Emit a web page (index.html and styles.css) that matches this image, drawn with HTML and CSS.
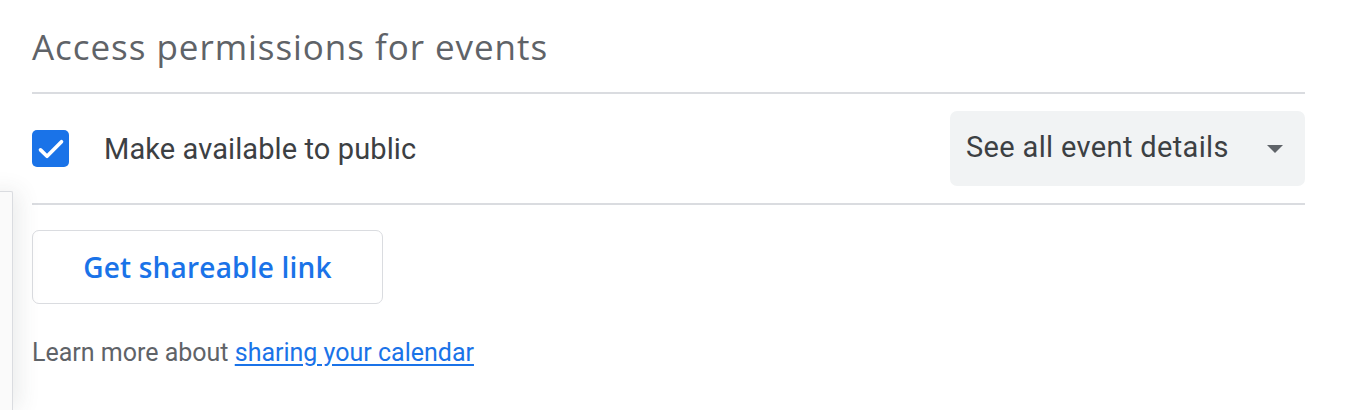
FILE: index.html
```html
<!DOCTYPE html>
<html>
<head>
<meta charset="utf-8">
<link rel="stylesheet" href="styles.css">
</head>
<body>
<div class="side-panel"></div>
<main class="section">
  <h2 class="title">Access permissions for events</h2>
  <div class="divider"></div>
  <div class="perm-row">
    <label class="check">
      <span class="box">
        <svg viewBox="0 0 24 24" width="34" height="34"><path d="M4.6 12.6l4.6 4.5 10.2-10.2" fill="none" stroke="#fff" stroke-width="2.6" stroke-linecap="round" stroke-linejoin="round"/></svg>
      </span>
      <span class="check-label">Make available to public</span>
    </label>
    <div class="select">
      <span class="select-text">See all event details</span>
      <span class="caret"></span>
    </div>
  </div>
  <div class="divider"></div>
  <button class="link-btn">Get shareable link</button>
  <p class="learn">Learn more about <a href="#">sharing your calendar</a></p>
</main>
</body>
</html>
```

FILE: styles.css
```css
html, body {
  margin: 0;
  padding: 0;
  background: #ffffff;
}
body {
  width: 1366px;
  height: 410px;
  overflow: hidden;
  position: relative;
  font-family: Roboto, "Liberation Sans", sans-serif;
}
.side-panel {
  position: absolute;
  left: -20px;
  top: 191px;
  width: 33px;
  height: 219px;
  box-sizing: border-box;
  background: #fafafa;
  border: 1px solid #dadce0;
  border-bottom: none;
  border-radius: 2px 2px 0 0;
  box-shadow: 6px 0 22px rgba(60, 64, 67, 0.10);
}
.section {
  width: 1273px;
  padding: 0 0 0 32px;
  display: flex;
  flex-direction: column;
}
.title {
  margin: 0;
  padding-top: 24px;
  height: 68px;
  box-sizing: border-box;
  font-family: "Open Sans", sans-serif;
  font-weight: 400;
  font-size: 35px;
  line-height: 46px;
  color: #5f6368;
  letter-spacing: 0.95px;
}
.divider {
  height: 2px;
  background: #dadce0;
  margin-top: 24px;
}
.perm-row {
  display: flex;
  align-items: center;
  justify-content: space-between;
  height: 109px;
}
.check {
  display: flex;
  align-items: center;
  gap: 35px;
}
.box {
  width: 37px;
  height: 37px;
  border-radius: 5px;
  background: #1a73e8;
  display: flex;
  align-items: center;
  justify-content: center;
}
.check-label {
  font-size: 29px;
  color: #3c4043;
  letter-spacing: 0.1px;
}
.select {
  width: 355px;
  height: 75px;
  box-sizing: border-box;
  background: #f1f3f4;
  border-radius: 7px;
  display: flex;
  align-items: center;
  justify-content: space-between;
  padding: 0 22px 0 16px;
}
.select-text {
  font-size: 29px;
  color: #3c4043;
  letter-spacing: 0.35px;
  padding-bottom: 4px;
}
.caret {
  width: 0;
  height: 0;
  border-left: 8px solid transparent;
  border-right: 8px solid transparent;
  border-top: 8px solid #5f6368;
}
.perm-row + .divider {
  margin-top: 0;
}
.link-btn {
  margin-top: 25px;
  align-self: flex-start;
  width: 351px;
  height: 74px;
  border: 1.5px solid #dadce0;
  border-radius: 7px;
  background: #ffffff;
  font-family: "Open Sans", sans-serif;
  font-weight: 600;
  font-size: 28px;
  letter-spacing: 0.2px;
  color: #1a73e8;
  padding: 0;
}
.learn {
  margin: 33px 0 0 0;
  font-size: 25px;
  line-height: 32px;
  color: #5f6368;
}
.learn a {
  color: #1a73e8;
  text-decoration: underline;
  text-underline-offset: 3px;
}
```
